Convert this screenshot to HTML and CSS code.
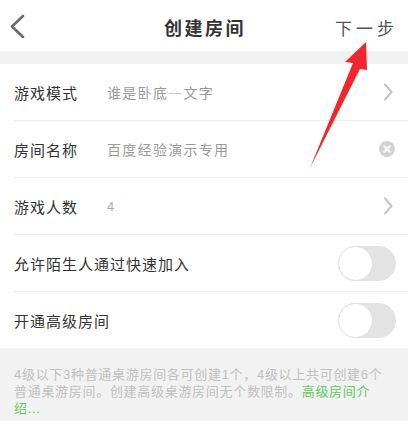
FILE: index.html
```html
<!DOCTYPE html>
<html lang="zh-CN">
<head>
<meta charset="utf-8">
<title>创建房间</title>
<link rel="stylesheet" href="styles.css">
</head>
<body>
<div class="page">
  <header class="nav">
    <svg class="nav-back" width="24" height="24" viewBox="0 0 24 24"><polyline points="17,2 6,12.5 17,23" fill="none" stroke="#6a6a6a" stroke-width="2.6" stroke-linecap="round" stroke-linejoin="round"/></svg>
    <h1 class="nav-title">创建房间</h1>
    <span class="nav-next">下一步</span>
  </header>
  <div class="band"></div>

  <ul class="form">
    <li class="row">
      <span class="label">游戏模式</span>
      <span class="value">谁是卧底—文字</span>
      <svg class="chev" width="10" height="18" viewBox="0 0 10 18"><polyline points="2,1.5 8.5,9 2,16.5" fill="none" stroke="#c4c4c4" stroke-width="2" stroke-linecap="round" stroke-linejoin="round"/></svg>
    </li>
    <li class="row">
      <span class="label">房间名称</span>
      <span class="value">百度经验演示专用</span>
      <svg class="clear" width="16" height="16" viewBox="0 0 16 16"><circle cx="8" cy="8" r="8" fill="#d2d2d2"/><path d="M5.2 5.2 L10.8 10.8 M10.8 5.2 L5.2 10.8" stroke="#fff" stroke-width="2" stroke-linecap="round"/></svg>
    </li>
    <li class="row">
      <span class="label">游戏人数</span>
      <span class="value value-num">4</span>
      <svg class="chev" width="10" height="18" viewBox="0 0 10 18"><polyline points="2,1.5 8.5,9 2,16.5" fill="none" stroke="#c4c4c4" stroke-width="2" stroke-linecap="round" stroke-linejoin="round"/></svg>
    </li>
    <li class="row">
      <span class="label label-wide">允许陌生人通过快速加入</span>
      <span class="switch"><span class="knob"></span></span>
    </li>
    <li class="row row-last">
      <span class="label label-wide">开通高级房间</span>
      <span class="switch"><span class="knob"></span></span>
    </li>
  </ul>

  <p class="note">4级以下3种普通桌游房间各可创建1个，4级以上共可创建6个普通桌游房间。创建高级桌游房间无个数限制。<a class="note-link">高级房间介绍...</a></p>

  <svg class="pointer" width="408" height="421" viewBox="0 0 408 421"><polygon points="366,42 345,62 353,63 310,168 360,69 367,70" fill="#f2262a"/></svg>
</div>
</body>
</html>
```

FILE: styles.css
```css
* { box-sizing: border-box; }

html, body {
  margin: 0;
  padding: 0;
  background: #f2f2f2;
}

body {
  font-family: "Noto Sans CJK SC", "Noto Sans", sans-serif;
  width: 408px;
  height: 421px;
  overflow: hidden;
}

.page {
  position: relative;
  width: 408px;
  height: 421px;
  background: #f2f2f2;
}

/* top navigation bar */
.nav {
  height: 51px;
  background: #fff;
  display: flex;
  align-items: center;
  position: relative;
  padding: 0 14px 0 6px;
}

.nav-back {
  display: block;
  margin-top: 1px;
}

.nav-title {
  position: absolute;
  left: 0;
  right: 0;
  top: 0;
  margin: 0;
  text-align: center;
  line-height: 55px;
  font-size: 18px;
  font-weight: 700;
  letter-spacing: 2.5px;
  color: #333;
  padding-left: 2px;
  pointer-events: none;
}

.nav-next {
  margin-left: auto;
  font-size: 17px;
  letter-spacing: 4px;
  color: #555;
  margin-right: -4px;
  margin-top: 3px;
}

.band {
  height: 13px;
  background: #f2f2f2;
}

/* settings list */
.form {
  list-style: none;
  margin: 0;
  padding: 0 0 0 14px;
  background: #fff;
}

.row {
  height: 57px;
  display: flex;
  align-items: center;
  border-bottom: 1px solid #ededed;
  padding-right: 13px;
}

.row-last {
  border-bottom: none;
  height: 56px;
}

.label {
  font-size: 15px;
  letter-spacing: 1px;
  color: #333;
  width: 93px;
  flex: none;
  white-space: nowrap;
}

.label-wide {
  width: auto;
}

.value {
  font-size: 14px;
  letter-spacing: 1.3px;
  color: #9a9a9a;
  flex: 1;
}

.value-num {
  font-family: "Liberation Sans", sans-serif;
  font-size: 13px;
  color: #aaa;
}

.chev {
  display: block;
  margin-right: 2px;
}

.clear {
  display: block;
}

.switch {
  margin-left: auto;
  width: 58px;
  height: 35px;
  border-radius: 18px;
  background: #e3e3e3;
  position: relative;
  flex: none;
  margin-right: -1px;
}

.knob {
  position: absolute;
  left: 0;
  top: 0;
  width: 35px;
  height: 35px;
  border-radius: 50%;
  background: #fff;
  border: 1px solid #e0e0e0;
}

/* footnote */
.note {
  margin: 0;
  padding: 18px 25px 0 14px;
  font-family: "Liberation Sans", "Noto Sans CJK SC", sans-serif;
  font-size: 13px;
  line-height: 17px;
  letter-spacing: 0.7px;
  color: #c0c0c0;
}

.note-link {
  color: #62c862;
}

/* red arrow drawn over the page */
.pointer {
  position: absolute;
  left: 0;
  top: 0;
  pointer-events: none;
}
```
